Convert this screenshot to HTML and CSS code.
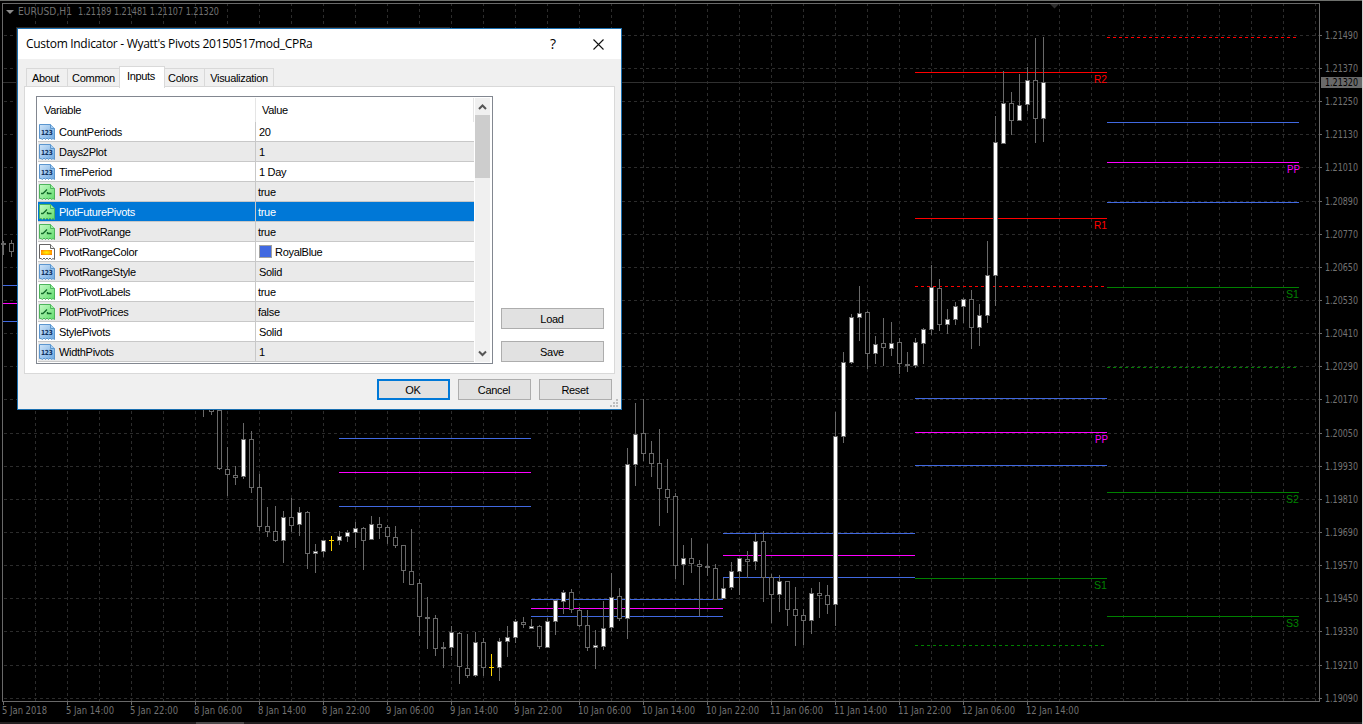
FILE: index.html
```html
<!DOCTYPE html>
<html lang="en">
<head>
<meta charset="utf-8">
<title>EURUSD,H1</title>
<link rel="stylesheet" href="styles.css">
</head>
<body>
<svg class="defs" width="0" height="0" aria-hidden="true">
  <defs>
    <linearGradient id="gBlue" x1="0" y1="0" x2="1" y2="1"><stop offset="0" stop-color="#cfe4f8"/><stop offset="1" stop-color="#6ea8e0"/></linearGradient>
    <linearGradient id="gGreen" x1="0" y1="0" x2="1" y2="1"><stop offset="0" stop-color="#c6fbc6"/><stop offset="1" stop-color="#5fdc6c"/></linearGradient>
    <radialGradient id="gFire" cx=".5" cy=".5" r=".6"><stop offset="0" stop-color="#fff200"/><stop offset=".5" stop-color="#ffc400"/><stop offset="1" stop-color="#ff7d00"/></radialGradient>
    <symbol id="num" viewBox="0 0 16 16">
      <path d="M.5.5h11l4 4v11l-1.500-1-1.500 1-1.500-1.500-1.500 1.500-1.500-1.500-1.500 1.500-1.500-1.500-1.500 1.500-1.500-1-1.500 0z" fill="url(#gBlue)" stroke="#5b96cf"/>
      <path d="M11.500.5v4h4" fill="#a9cdf0" stroke="#5b96cf"/>
      <text x="2" y="10.800" class="num-text" textLength="11.500" lengthAdjust="spacingAndGlyphs">123</text>
    </symbol>
    <symbol id="bool" viewBox="0 0 16 16">
      <path d="M.5.5h11l4 4v11l-1.500-1-1.500 1-1.500-1.500-1.500 1.500-1.500-1.500-1.500 1.500-1.500-1.500-1.500 1.500-1.500-1-1.500 0z" fill="url(#gGreen)" stroke="#4db45c"/>
      <path d="M11.500.5v4h4" fill="#9bef9f" stroke="#4db45c"/>
      <path d="M2 9.500h2l4-4M8.500 8v1.500h4" fill="none" stroke="#126b2a" stroke-width="1.300"/>
    </symbol>
    <symbol id="color" viewBox="0 0 16 16">
      <path d="M.5.5h11l4 4v11l-1.500-1-1.500 1-1.500-1.500-1.500 1.500-1.500-1.500-1.500 1.500-1.500-1.500-1.500 1.500-1.500-1-1.500 0z" fill="#fff" stroke="#666"/>
      <path d="M11.500.5v4h4" fill="#eee" stroke="#666"/>
      <rect x="2" y="6" width="11" height="5" fill="url(#gFire)"/>
    </symbol>
  </defs>
</svg>

<main class="terminal">
  <svg class="chart" id="chart" width="1363" height="724" viewBox="0 0 1363 724"></svg>

  <section class="dialog">
    <header class="titlebar">
      <h1 class="title">Custom Indicator - Wyatt's Pivots 20150517mod_CPRa</h1>
      <span class="help">?</span>
      <svg class="close" width="11" height="11" viewBox="0 0 11 11"><path d="M.5.5l10 10M10.500.5l-10 10" stroke="#111" stroke-width="1.100"/></svg>
    </header>
    <nav class="tabs">
      <span class="tab tab-about">About</span><span class="tab tab-common">Common</span><span class="tab tab-inputs active">Inputs</span><span class="tab tab-colors">Colors</span><span class="tab tab-vis">Visualization</span>
    </nav>
    <div class="pane">
      <div class="list">
        <div class="table">
          <div class="thead"><span class="th-name">Variable</span><span class="th-value">Value</span></div>
          <div id="rows"></div>
        </div>
        <div class="scroll">
          <svg class="arrow" width="15" height="17" viewBox="0 0 15 17"><path d="M4 11l3.500-3.500L11 11" fill="none" stroke="#555" stroke-width="2"/></svg>
          <div class="thumb"></div>
          <svg class="arrow" width="15" height="17" viewBox="0 0 15 17"><path d="M4 6.500L7.500 10 11 6.500" fill="none" stroke="#555" stroke-width="2"/></svg>
        </div>
      </div>
      <div class="side"><span class="btn">Load</span><span class="btn">Save</span></div>
    </div>
    <footer class="actions"><span class="btn primary">OK</span><span class="btn">Cancel</span><span class="btn">Reset</span></footer>
    <svg class="grip" width="8" height="8" viewBox="0 0 8 8"><path d="M6 0h2v2h-2zM3 3h2v2h-2zM6 3h2v2h-2zM0 6h2v2h-2zM3 6h2v2h-2zM6 6h2v2h-2z" fill="#bfbfbf"/></svg>
  </section>
</main>
<script src="app.js"></script>
</body>
</html>
```
FILE: styles.css
```css
* { box-sizing: border-box; }
body { margin: 0; background: #000; overflow: hidden; font-family: "Liberation Sans", Arial, sans-serif; }
.defs { position: absolute; }
.terminal { position: relative; width: 1363px; height: 724px; overflow: hidden; background: #000; }
.chart { display: block; }
.axis { font: 10px "DejaVu Sans Condensed", "DejaVu Sans", sans-serif; fill: #727272; }
.axis-dark { fill: #000; }
.level { font: 11px "Liberation Sans", Arial, sans-serif; }
.num-text { font: bold 7px "DejaVu Sans", sans-serif; fill: #0d2f5c; }

.dialog {
  position: absolute; left: 17px; top: 28px; width: 605px; height: 382px;
  border: 1px solid #1a6fb0; background: #f0f0f0; color: #000;
  font-size: 11px; letter-spacing: -0.3px; line-height: 13px;
}
.titlebar { display: flex; align-items: center; height: 30px; padding: 0 17px 0 8px; background: #fff; }
.title { margin: 0; flex: 1; font: 12px/16px "Open Sans", "Noto Sans", sans-serif; letter-spacing: -0.3px; white-space: nowrap; }
.help { width: 7px; margin-right: 36px; font: 14px/16px "Open Sans", sans-serif; }
.close { display: block; }

.tabs { display: flex; align-items: flex-end; height: 28px; padding-left: 8px; }
.tab {
  height: 19px; margin-right: -1px; padding: 3px 2px 0 0; text-align: center; white-space: nowrap;
  border: 1px solid #d9d9d9; background: #f0f0f0;
}
.tab-about { width: 42px; padding-right: 3px; }
.tab-common { width: 53px; padding-right: 0; }
.tab-inputs { width: 46px; }
.tab-colors { width: 41px; padding-right: 3px; }
.tab-vis { width: 70px; padding-right: 0; }
.tab.active { position: relative; z-index: 1; height: 22px; margin-bottom: -1px; border-bottom: 0; background: #fff; }

.pane {
  display: flex; width: 591px; height: 288px; margin: -1px 0 0 6px; padding: 9px 10px 9px 11px;
  border: 1px solid #d9d9d9; background: #fff;
}
.list { display: flex; width: 457px; height: 268px; padding: 1px; border: 1px solid #828790; }
.table { width: 437px; height: 264px; }
.thead { display: flex; height: 24px; width: 436px; border-right: 1px solid #e5e5e5; line-height: 24px; }
.th-name { width: 217px; padding-left: 6px; }
.th-value { flex: 1; padding-left: 6px; border-left: 1px solid #e5e5e5; }
.row { display: flex; width: 436px; height: 20px; border-bottom: 1px solid #c8c8c8; background: #fff; line-height: 20px; }
.row:nth-child(even) { background: #eaeaea; }
.row.selected { background: #0078d7; color: #fff; }
.cell-name { display: flex; width: 217px; padding: 2px 0 0 1px; gap: 4px; line-height: 16px; }
.cell-value { display: flex; align-items: center; flex: 1; gap: 3px; padding-left: 3px; border-left: 1px solid #c8c8c8; }
.cell-value.word { padding-left: 2px; }
.swatch { width: 13px; height: 13px; border: 1px solid #a0a0a0; background: #4169e1; }
.scroll { display: flex; flex-direction: column; width: 15px; height: 264px; background: #f0f0f0; }
.arrow { display: block; }
.thumb { height: 63px; margin-bottom: 167px; background: #cdcdcd; }

.side { display: flex; flex-direction: column; gap: 12px; width: 103px; margin: 212px 0 0 8px; }
.btn { height: 21px; padding-right: 1px; line-height: 20px; text-align: center; border: 1px solid #adadad; background: #e1e1e1; }
.actions { display: flex; gap: 8px; justify-content: flex-end; padding: 5px 9px 0 0; }
.actions .btn { width: 73px; }
.actions .primary { border: 2px solid #0078d7; line-height: 18px; }
.grip { position: absolute; right: 3px; bottom: 2px; }
```
FILE: app.js
```js
const parts = [];
const rect = (x, y, w, h, fill) => parts.push(`<rect x="${x}" y="${y}" width="${w}" height="${h}" fill="${fill}" shape-rendering="crispEdges"/>`);
const dash = (x1, y1, x2, y2, color) => parts.push(`<line x1="${x1}" y1="${y1}" x2="${x2}" y2="${y2}" stroke="${color}" stroke-dasharray="3 3" shape-rendering="crispEdges"/>`);
const label = (x, y, s, w, cls = 'axis') => parts.push(`<text x="${x}" y="${y}" class="${cls}" textLength="${w}" lengthAdjust="spacingAndGlyphs">${s}</text>`);

const GREY = '#696969', GRID = '#2c2c2c';
const BLUE = '#4169e1', PINK = '#ff00ff', RED = '#ff0000', GREEN = '#008000';

// grid
const ys = [35, 68, 101, 134, 167, 201, 234, 267, 300, 333, 366, 399, 433, 466, 499, 532, 565, 598, 631, 665, 698];
ys.forEach(y => dash(4, y + .5, 1319, y + .5, GRID));
for (let x = 35; x < 1319; x += 32) {
  rect(x, 4, 1, 2, GRID);
  dash(x + .5, 9, x + .5, 701, GRID);
}
rect(3, 82, 1316, 1, '#303030');
parts.push('<path d="M1050 4h9l-4.500 4.500z" fill="#303030"/>');

// pivot levels: x, width, y, colour, dashed
[
  [3, 15, 285, BLUE], [3, 15, 303, PINK], [3, 15, 321, BLUE],
  [339, 192, 438, BLUE], [339, 192, 472, PINK], [339, 192, 506, BLUE],
  [531, 192, 599, BLUE], [531, 192, 608, PINK], [531, 192, 616, BLUE],
  [723, 192, 533, BLUE], [723, 192, 555, PINK], [723, 192, 577, BLUE],
  [915, 192, 72, RED], [915, 192, 218, RED], [915, 190, 286, RED, 1],
  [915, 192, 398, BLUE], [915, 192, 432, PINK], [915, 192, 465, BLUE],
  [915, 192, 578, GREEN], [915, 190, 645, GREEN, 1],
  [1107, 190, 37, RED, 1], [1107, 192, 122, BLUE], [1107, 192, 162, PINK], [1107, 192, 202, BLUE],
  [1107, 192, 287, GREEN], [1107, 190, 367, GREEN, 1], [1107, 192, 492, GREEN], [1107, 192, 616, GREEN]
].forEach(([x, w, y, c, d]) => d ? dash(x, y + .5, x + w, y + .5, c) : rect(x, y, w, 1, c));

// candles: high, low, body top, body bottom, kind (w up, b down, y flat)
const draw = (x, [hi, lo, t, b, k]) => {
  if (k === 'y') { rect(x, hi, 1, lo - hi, '#ffd700'); rect(x - 2, t, 5, 1, '#ffd700'); return; }
  rect(x, hi, 1, lo - hi, GREY);
  rect(x - 2, t, 5, b - t, GREY);
  if (b - t > 2) rect(x - 1, t + 1, 3, b - t - 2, k === 'w' ? '#fff' : '#000');
};
draw(3, [241, 255, 243, 245, 'b']);
draw(11, [240, 257, 243, 252, 'b']);
[
  [400,417,400,401,'b'],[400,415,400,412,'b'],[409,470,410,469,'b'],[447,496,469,475,'b'],[466,485,475,478,'b'],
  [423,479,439,477,'w'],[431,493,439,488,'b'],[474,531,487,527,'b'],[507,537,526,532,'b'],[506,542,531,541,'b'],
  [511,563,517,541,'w'],[498,532,517,526,'b'],[507,536,512,525,'w'],[511,569,512,554,'b'],[544,573,551,554,'w'],
  [540,557,540,552,'w'],[536,551,540,541,'y'],[531,545,536,541,'w'],[530,542,532,537,'w'],[522,548,528,533,'w'],
  [527,570,528,541,'b'],[516,540,524,540,'w'],[517,539,524,528,'b'],[525,544,527,537,'b'],[526,548,537,546,'b'],
  [545,583,545,571,'b'],[529,585,571,585,'b'],[579,636,583,617,'b'],[597,649,617,619,'b'],[615,656,618,649,'b'],
  [642,668,647,649,'b'],[626,656,632,648,'w'],[632,684,633,667,'b'],[634,678,668,676,'b'],[632,677,642,676,'w'],
  [638,676,642,668,'b'],[654,676,667,668,'y'],[638,681,641,668,'w'],[626,657,637,642,'w'],[619,643,621,638,'w'],
  [617,628,622,625,'b'],[619,629,626,629,'w'],[625,649,626,647,'b'],[618,648,621,648,'w'],[600,635,600,622,'w'],
  [590,614,592,602,'w'],[589,613,592,610,'b'],[607,627,610,626,'b'],[610,651,625,648,'b'],[630,669,645,648,'w'],
  [601,650,628,647,'w'],[573,631,597,628,'w'],[588,621,596,619,'b'],[448,639,464,619,'w'],[403,486,434,465,'w'],
  [399,461,433,454,'b'],[441,477,453,464,'b'],[429,526,463,489,'b'],[459,513,489,498,'b'],[493,579,496,566,'b'],
  [545,585,558,565,'w'],[538,573,558,564,'b'],[560,616,564,567,'b'],[544,576,566,568,'b'],[564,600,568,600,'b'],
  [578,599,588,599,'w'],[562,590,571,588,'w'],[558,595,558,572,'w'],[551,578,559,562,'b'],[534,570,541,562,'w'],
  [531,602,541,578,'b'],[574,623,577,595,'b'],[575,612,581,595,'w'],[581,626,581,610,'b'],[587,646,609,616,'b'],
  [609,645,615,621,'b'],[588,634,593,621,'w'],[582,618,593,596,'b'],[585,614,595,605,'b'],[412,626,436,605,'w'],
  [352,443,362,437,'w'],[314,364,317,363,'w'],[286,341,313,318,'w'],[311,369,312,354,'b'],[336,364,344,354,'w'],
  [318,366,343,348,'b'],[322,356,343,349,'w'],[338,374,342,364,'b'],[352,372,364,366,'b'],[338,368,342,366,'w'],
  [328,364,329,344,'w'],[265,335,287,330,'w'],[279,331,288,325,'b'],[309,334,319,325,'w'],[302,325,306,320,'w'],
  [298,323,299,307,'w'],[290,349,299,328,'b'],[304,346,315,328,'w'],[241,323,275,316,'w'],[116,306,142,276,'w'],
  [71,144,103,144,'w'],[92,135,103,121,'b'],[74,121,105,121,'w'],[67,111,80,105,'w'],[38,143,80,119,'b'],[37,142,82,119,'w']
].forEach((c, i) => draw(203 + i * 8, c));

// level names
[
  [1094, 83, 'R2', RED], [1094, 229, 'R1', RED], [1095, 443, 'PP', PINK], [1094, 589, 'S1', GREEN],
  [1287, 173, 'PP', PINK], [1286, 298, 'S1', GREEN], [1286, 503, 'S2', GREEN], [1286, 627, 'S3', GREEN]
].forEach(([x, y, s, c]) => parts.push(`<text x="${x}" y="${y}" class="level" fill="${c}" textLength="13" lengthAdjust="spacingAndGlyphs">${s}</text>`));

// frame and axes
rect(0, 0, 1363, 1, '#6e706d');
rect(2, 3, 1318, 1, GREY);
rect(2, 3, 1, 699, GREY);
rect(1319, 3, 1, 699, GREY);
rect(2, 701, 1318, 1, GREY);
rect(0, 722, 1363, 2, '#231f20');
rect(196, 722, 48, 2, '#4d4a4b');
rect(1362, 0, 1, 724, '#d0d0d0');
rect(16, 27, 434, 1, '#2b2624');
rect(16, 27, 1, 193, '#2b2624');

ys.forEach((y, i) => {
  rect(1320, y, 2, 1, GREY);
  label(1325, y + 4, (1.2149 - i * 0.0012).toFixed(5), 33);
});
rect(1321, 77, 41, 11, GREY);
label(1325, 86, '1.21320', 33, 'axis axis-dark');

['5 Jan 2018', '5 Jan 14:00', '5 Jan 22:00', '8 Jan 06:00', '8 Jan 14:00', '8 Jan 22:00', '9 Jan 06:00', '9 Jan 14:00', '9 Jan 22:00',
 '10 Jan 06:00', '10 Jan 14:00', '10 Jan 22:00', '11 Jan 06:00', '11 Jan 14:00', '11 Jan 22:00', '12 Jan 06:00', '12 Jan 14:00'
].forEach((s, i) => {
  rect(3 + i * 64, 702, 1, 3, GREY);
  label(2 + i * 64, 714, s, i === 0 ? 45 : s.length > 11 ? 53 : 48);
});

parts.push('<path d="M6 10h8l-4 4z" fill="#8a8a8a"/>');
label(18, 15, 'EURUSD,H1', 54);
label(78, 15, '1.21189 1.21481 1.21107 1.21320', 141);
document.getElementById('chart').innerHTML = parts.join('');

// indicator inputs
document.getElementById('rows').innerHTML = [
  ['num', 'CountPeriods', '20'], ['num', 'Days2Plot', '1'], ['num', 'TimePeriod', '1 Day'],
  ['bool', 'PlotPivots', 'true'], ['bool', 'PlotFuturePivots', 'true'], ['bool', 'PlotPivotRange', 'true'],
  ['color', 'PivotRangeColor', 'RoyalBlue'], ['num', 'PivotRangeStyle', 'Solid'], ['bool', 'PlotPivotLabels', 'true'],
  ['bool', 'PlotPivotPrices', 'false'], ['num', 'StylePivots', 'Solid'], ['num', 'WidthPivots', '1']
].map(([icon, name, value], i) =>
  `<div class="row${i === 4 ? ' selected' : ''}"><span class="cell-name"><svg width="16" height="16"><use href="#${icon}"/></svg>${name}</span>` +
  `<span class="cell-value${icon === 'bool' ? ' word' : ''}">${icon === 'color' ? '<i class="swatch"></i>' : ''}${value}</span></div>`).join('');
```
